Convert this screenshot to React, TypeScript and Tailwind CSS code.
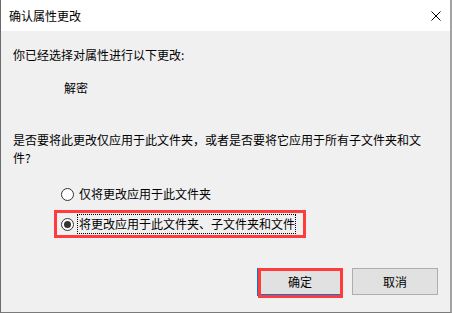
import React from "react";

const font = { fontFamily: '"Noto Sans CJK SC", "Noto Sans", sans-serif' };

function Radio({ checked }: { checked?: boolean }) {
  return (
    <span className="w-[13px] h-[13px] shrink-0 rounded-full border border-[#333333] bg-white flex items-center justify-center">
      {checked && <span className="w-[7px] h-[7px] rounded-full bg-[#333333]" />}
    </span>
  );
}

export default function App() {
  return (
    <div
      className="w-[452px] h-[313px] flex flex-col border-l border-l-[#6b6b6b] border-r-2 border-r-[#a3a3a3] border-b border-b-[#7a7a7a] text-[12px] text-black bg-[#f0f0f0]"
      style={font}
    >
      {/* title bar */}
      <div className="h-[31px] shrink-0 bg-white flex items-center justify-between pl-[8px] pr-[9px]">
        <span className="leading-[16px]">确认属性更改</span>
        <svg width="10" height="10" viewBox="0 0 10 10" className="text-black">
          <path d="M0.5 0.5 L9.5 9.5 M9.5 0.5 L0.5 9.5" stroke="currentColor" strokeWidth="1" />
        </svg>
      </div>

      {/* body */}
      <div className="flex-1 flex flex-col pl-[12px]">
        <div className="mt-[16px] leading-[16px]">你已经选择对属性进行以下更改:</div>
        <div className="mt-[17px] pl-[51px] leading-[16px]">解密</div>
        <p className="mt-[35px] w-[416px] leading-[18px]">
          是否要将此更改仅应用于此文件夹，或者是否要将它应用于所有子文件夹和文件?
        </p>

        <div className="mt-[13px] ml-[41px] flex flex-col gap-[2px]">
          <label className="h-[28px] self-start flex items-center border-[3px] border-transparent pl-[4px] pr-[6px] gap-[3px]">
            <Radio />
            <span className="px-px leading-[18px] border border-transparent">仅将更改应用于此文件夹</span>
          </label>
          <label className="h-[28px] w-[252px] flex items-center border-[3px] border-[#ff3b3b] pl-[4px] gap-[3px]">
            <Radio checked />
            <span className="px-0 pl-px leading-[18px] border border-dotted border-black">
              将更改应用于此文件夹、子文件夹和文件
            </span>
          </label>
        </div>

        <div className="mt-[30px] flex justify-end gap-[9px] pr-[12px]">
          <div className="relative">
            <button className="w-[86px] h-[28px] bg-[#e1e1e1] border-2 border-[#0078d7] flex items-center justify-center leading-[16px]">
              确定
            </button>
            <div className="absolute left-[1px] top-0 right-0 -bottom-[2px] border-[3px] border-[#ff3b3b] pointer-events-none" />
          </div>
          <button className="w-[86px] h-[27px] bg-[#e1e1e1] border border-[#adadad] flex items-center justify-center leading-[16px]">
            取消
          </button>
        </div>
      </div>
    </div>
  );
}
